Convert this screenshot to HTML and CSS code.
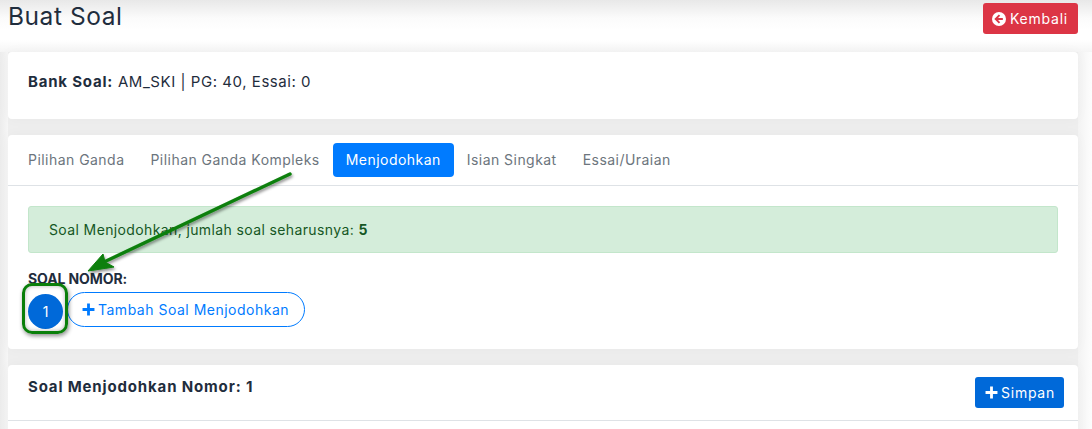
FILE: index.html
```html
<!DOCTYPE html>
<html lang="id">
<head>
<meta charset="utf-8">
<title>Buat Soal</title>
<link rel="stylesheet" href="styles.css">
</head>
<body>
<div class="page">
  <header class="head">
    <h1 class="title">Buat Soal</h1>
    <a class="btn btn-red"><svg class="ic" viewBox="0 0 16 16"><circle cx="8" cy="8" r="8" fill="#fff"/><path d="M8.6 3.6 4.2 8l4.4 4.4M5 8h7.4" fill="none" stroke="#dc3545" stroke-width="2.2"/></svg>Kembali</a>
  </header>
  <section class="card info"><b>Bank Soal:</b> AM_SKI | PG: 40, Essai: 0</section>
  <section class="card main">
    <nav class="tabs">
      <a class="tab">Pilihan Ganda</a>
      <a class="tab">Pilihan Ganda Kompleks</a>
      <a class="tab active">Menjodohkan</a>
      <a class="tab">Isian Singkat</a>
      <a class="tab">Essai/Uraian</a>
    </nav>
    <div class="body">
      <div class="alert">Soal Menjodohkan, jumlah soal seharusnya: <b>5</b></div>
      <div class="label">SOAL NOMOR:</div>
      <div class="nums">
        <a class="num">1<span class="mark"></span></a>
        <a class="add"><svg class="ic-plus" viewBox="0 0 12 12"><path d="M6 .5v11M.5 6h11" stroke="#007bff" stroke-width="2.6" fill="none"/></svg>Tambah Soal Menjodohkan</a>
      </div>
    </div>
  </section>
  <section class="card last">
    <div class="last-head">
      <h2 class="sub">Soal Menjodohkan Nomor: 1</h2>
      <a class="btn btn-blue"><svg class="ic-plus" viewBox="0 0 12 12"><path d="M6 .5v11M.5 6h11" stroke="#fff" stroke-width="2.6" fill="none"/></svg>Simpan</a>
    </div>
  </section>
  <svg class="arrow" width="1092" height="429" viewBox="0 0 1092 429">
    <defs><filter id="s" x="-20%" y="-20%" width="140%" height="140%"><feDropShadow dx="1" dy="2" stdDeviation="1.5" flood-color="#000" flood-opacity=".45"/></filter></defs>
    <g filter="url(#s)"><path d="M290 174 104 262" stroke="#0a7f0a" stroke-width="3.4" fill="none" stroke-linecap="round"/><path d="M88 271 103 254 105 262 114 267Z" fill="#0a7f0a" stroke="#0a7f0a" stroke-linejoin="round"/></g>
  </svg>
</div>
</body>
</html>
```
FILE: styles.css
```css
* { box-sizing: border-box; }
html, body { margin: 0; height: 100%; }
body { background: #eee; overflow: hidden; font-family: Inter, "Liberation Sans", sans-serif; color: #1f2d3d; }
.page { position: relative; width: 1092px; height: 429px; padding: 0 14px 0 8px; overflow: hidden;
  background:
    linear-gradient(180deg, #e8e8e8 0, #fbfbfb 18px, #fff 30px, #fff 40px, #f5f5f5 52px) no-repeat 0 0 / 1092px 52px,
    linear-gradient(90deg, #ececec, #f6f6f6) no-repeat 0 0 / 8px 429px,
    linear-gradient(90deg, #f3f3f3, #fdfdfd) no-repeat 1078px 0 / 14px 429px,
    #eee; }
.head { display: flex; justify-content: space-between; align-items: flex-start; height: 52px; padding-top: 3px; }
.title { margin: -1px 0 0; font-size: 24.5px; font-weight: 400; line-height: 28px; letter-spacing: .55px; color: #1f2d3d; }
.btn { display: inline-flex; align-items: center; height: 31px; border-radius: 3px; color: #fff; font-size: 14px; white-space: nowrap; }
.btn-red { background: #dc3545; padding: 0 10px 0 9px; letter-spacing: .78px; }
.btn-blue { background: #0069d9; margin-top: 12px; padding: 0 9px 0 10px; letter-spacing: .75px; }
.ic { width: 14px; height: 14px; margin-right: 4px; }
.ic-plus { width: 13px; height: 13px; margin-right: 3px; flex: none; }
.card { background: #fff; border-radius: 4px; box-shadow: 0 0 14px rgba(0,0,0,.03); }
.info { height: 67px; padding: 20px; font-size: 15px; line-height: 20px; letter-spacing: .55px; margin-bottom: 16px; }
.info b { font-weight: 700; letter-spacing: .8px; }
.main { height: 214px; margin-bottom: 16px; }
.tabs { display: flex; align-items: center; height: 51px; padding: 8px 7px; border-bottom: 1px solid #dee2e6; font-size: 14px; letter-spacing: .46px; }
.tab { padding: 0 13px; height: 34px; line-height: 34px; color: #6c757d; border-radius: 4px; white-space: nowrap; }
.active { background: #007bff; color: #fff; }
.body { padding: 20px; }
.alert { height: 47px; line-height: 45px; padding: 0 20px; background: #d4edda; border: 1px solid #c3e6cb; border-radius: 3px; font-size: 14px; letter-spacing: .38px; color: #155724; }
.alert b { font-weight: 700; }
.label { margin-top: 17px; height: 22px; font-size: 14px; line-height: 18px; font-weight: 700; letter-spacing: -.1px; color: #1f2d3d; }
.nums { display: flex; align-items: flex-start; }
.num { position: relative; display: flex; align-items: center; justify-content: center; width: 35px; height: 35px; margin-top: 2px; border-radius: 50%; background: #0069d9; color: #fff; font-size: 14px; flex: none; }
.mark { position: absolute; left: -6px; right: -5px; top: -11px; bottom: -5px; border: 3px solid #0a7f0a; border-radius: 10px; box-shadow: 1px 2px 4px rgba(0,0,0,.45), inset 0 0 4px rgba(0,0,0,.3); }
.add { display: inline-flex; align-items: center; height: 35px; margin-left: 4px; padding: 0 15px 0 14px; border: 1px solid #007bff; border-radius: 18px; color: #007bff; font-size: 14px; letter-spacing: .5px; white-space: nowrap; }
.last { height: 80px; border-radius: 4px 4px 0 0; }
.last-head { display: flex; justify-content: space-between; align-items: flex-start; height: 56px; padding: 0 14px 0 20px; border-bottom: 1px solid #dee2e6; }
.sub { margin: 12px 0 0; font-size: 15px; line-height: 20px; font-weight: 700; letter-spacing: .85px; color: #1f2d3d; }
.arrow { position: absolute; left: 0; top: 0; pointer-events: none; }
```
